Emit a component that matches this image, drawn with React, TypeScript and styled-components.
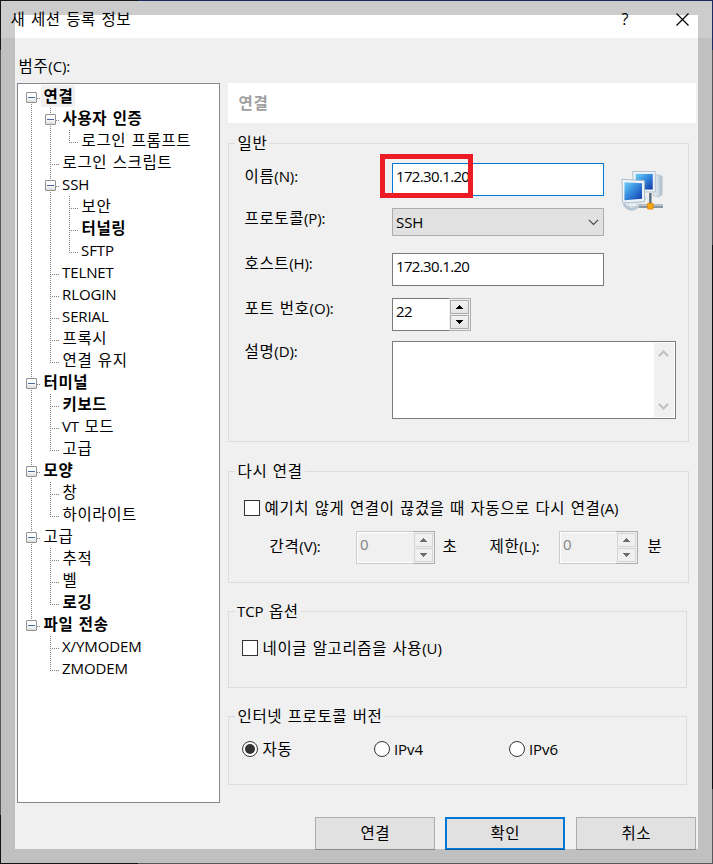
import React from "react";
import styled, { createGlobalStyle, css } from "styled-components";

const Global = createGlobalStyle`
  * { box-sizing: border-box; }
  html, body { margin: 0; padding: 0; }
  body {
    width: 713px;
    height: 864px;
    overflow: hidden;
    font-family: "Open Sans", "Noto Sans CJK KR", sans-serif;
    font-size: 15px;
    line-height: 20px;
    color: #000;
  }
`;

const Desktop = styled.div`
  width: 713px;
  height: 864px;
  padding: 1px;
  background:
    linear-gradient(90deg, #17161a 138px, #1b2a60 138px) 0 0 / 713px 1px no-repeat,
    linear-gradient(90deg, #141414 138px, #57575a 138px) 0 863px / 713px 1px no-repeat,
    linear-gradient(#17161a 50px, #57575a 50px, #57575a 815px, #141414 815px) 0 0 / 1px 864px no-repeat,
    linear-gradient(#1b2a60 50px, #57575a 50px, #4a4a4c 245px, #0c0c10 245px, #0c0c10 789px, #57575a 789px) 712px 0 / 1px 864px no-repeat;
`;

const Window = styled.div`
  position: relative;
  width: 711px;
  height: 862px;
  background: #f0f0f0;
  display: flex;
  flex-direction: column;

  &::after {
    content: "";
    position: absolute;
    inset: 0;
    border: 14px solid rgba(0, 0, 0, 0.2);
    pointer-events: none;
  }
`;

const TitleBar = styled.header`
  display: flex;
  align-items: center;
  flex: none;
  height: 37px;
  padding: 0 23px 0 9px;
  background: #fff;
`;

const Title = styled.h1`
  flex: 1;
  margin: -2px 0 0;
  font-size: inherit;
  font-weight: 400;
`;

const HelpButton = styled.span`
  width: 12px;
  margin: -2px 45px 0 0;
  font-size: 16px;
  text-align: center;
`;

const CloseIcon = styled.svg`
  display: block;
  width: 13px;
  height: 13px;
`;

const Hangul = styled.span`
  padding-left: 0.6px;
  font-family: "Noto Sans CJK KR", sans-serif;
  font-size: 15.5px;
  line-height: 1;
  letter-spacing: 0.6px;
`;

const Latin = styled.span<{ $numeric?: boolean }>`
  white-space: pre;
  letter-spacing: ${(p) => (p.$numeric ? "-0.65px" : "-0.1px")};
  word-spacing: 1.1px;
`;

function Txt({ children }: { children: string }) {
  return (
    <>
      {children.split(/([가-힣]+)/).filter(Boolean).map((run, i) =>
        /[가-힣]/.test(run) ? (
          <Hangul key={i}>{run}</Hangul>
        ) : (
          <Latin key={i} $numeric={/^[\d.]+$/.test(run)}>{run}</Latin>
        )
      )}
    </>
  );
}

const Body = styled.main`
  display: flex;
  flex: none;
  height: 765px;
`;

const Sidebar = styled.nav`
  width: 203px;
  margin-left: 16px;
`;

const CategoryLabel = styled.div`
  height: 45px;
  padding: 18px 0 0 1px;
`;

const Tree = styled.ul`
  height: 720px;
  margin: 0;
  padding: 2px 0 0 4px;
  list-style: none;
  background: #fff;
  border: 1px solid #828790;
`;

const TreeRow = styled.li<{ $bold?: boolean }>`
  display: flex;
  height: 22px;
  font-weight: ${(p) => (p.$bold ? 700 : 400)};
`;

const dotsV = "repeating-linear-gradient(180deg, #808080 0 1px, transparent 1px 2px)";
const dotsH = "repeating-linear-gradient(90deg, #808080 0 1px, transparent 1px 2px)";

type Guide = "blank" | "line" | "tee" | "end" | "start";

const guides = {
  blank: css``,
  line: css`background: ${dotsV} 9px 0 / 1px 22px no-repeat;`,
  tee: css`background: ${dotsV} 9px 0 / 1px 22px no-repeat, ${dotsH} 9px 12px / 9px 1px no-repeat;`,
  end: css`background: ${dotsV} 9px 0 / 1px 12px no-repeat, ${dotsH} 9px 12px / 9px 1px no-repeat;`,
  start: css`background: ${dotsV} 9px 12px / 1px 10px no-repeat, ${dotsH} 9px 12px / 9px 1px no-repeat;`,
};

const GuideCell = styled.span<{ $kind: Guide }>`
  display: flex;
  flex: none;
  width: 19px;
  height: 22px;
  padding: 6px 0 0 4px;
  ${(p) => guides[p.$kind]}
`;

const Toggle = styled.span`
  display: flex;
  align-items: center;
  justify-content: center;
  width: 11px;
  height: 11px;
  border: 1px solid #919191;
  border-radius: 1px;
  background: linear-gradient(#fff 45%, #dcdcdc);

  &::before {
    content: "";
    width: 7px;
    height: 1px;
    background: #4b63a7;
  }
`;

const NodeText = styled.span<{ $selected?: boolean }>`
  height: 22px;
  margin-top: -1px;
  padding: 0 2px;
  line-height: 22px;
  background: ${(p) => (p.$selected ? "#f0f0f0" : "transparent")};
`;

type Node = { label: string; bold?: boolean; guides: Guide[]; open?: boolean; selected?: boolean };

const nodes: Node[] = [
  { label: "연결", bold: true, guides: ["start"], open: true, selected: true },
  { label: "사용자 인증", bold: true, guides: ["line", "tee"], open: true },
  { label: "로그인 프롬프트", guides: ["line", "line", "end"] },
  { label: "로그인 스크립트", guides: ["line", "tee"] },
  { label: "SSH", guides: ["line", "tee"], open: true },
  { label: "보안", guides: ["line", "line", "tee"] },
  { label: "터널링", bold: true, guides: ["line", "line", "tee"] },
  { label: "SFTP", guides: ["line", "line", "end"] },
  { label: "TELNET", guides: ["line", "tee"] },
  { label: "RLOGIN", guides: ["line", "tee"] },
  { label: "SERIAL", guides: ["line", "tee"] },
  { label: "프록시", guides: ["line", "tee"] },
  { label: "연결 유지", guides: ["line", "end"] },
  { label: "터미널", bold: true, guides: ["tee"], open: true },
  { label: "키보드", bold: true, guides: ["line", "tee"] },
  { label: "VT 모드", guides: ["line", "tee"] },
  { label: "고급", guides: ["line", "end"] },
  { label: "모양", bold: true, guides: ["tee"], open: true },
  { label: "창", guides: ["line", "tee"] },
  { label: "하이라이트", guides: ["line", "end"] },
  { label: "고급", guides: ["tee"], open: true },
  { label: "추적", guides: ["line", "tee"] },
  { label: "벨", guides: ["line", "tee"] },
  { label: "로깅", bold: true, guides: ["line", "end"] },
  { label: "파일 전송", bold: true, guides: ["end"], open: true },
  { label: "X/YMODEM", guides: ["blank", "tee"] },
  { label: "ZMODEM", guides: ["blank", "end"] },
];

const Content = styled.section`
  display: flex;
  flex-direction: column;
  width: 468px;
  margin-left: 8px;
  padding-top: 45px;
`;

const PageHeader = styled.h2`
  flex: none;
  height: 40px;
  margin: 0 0 20px;
  padding: 10px 0 0 10px;
  background: #fff;
  color: #a0a0a0;
  font-size: inherit;
  font-weight: 700;
`;

const Group = styled.section<{ $w: number; $h: number; $gap?: number }>`
  flex: none;
  width: ${(p) => p.$w}px;
  height: ${(p) => p.$h}px;
  margin-bottom: ${(p) => p.$gap ?? 0}px;
  border: 1px solid #dcdcdc;
`;

const Legend = styled.h3`
  width: fit-content;
  height: 20px;
  margin: -11px 0 0 6px;
  padding: 0 2px;
  background: #f0f0f0;
  font-size: inherit;
  font-weight: 400;
`;

const FormRow = styled.div<{ $h: number; $gap: number }>`
  display: flex;
  height: ${(p) => p.$h}px;
  margin-top: ${(p) => p.$gap}px;
  padding-left: 15px;
`;

const Label = styled.label<{ $w: number; $top: number }>`
  flex: none;
  width: ${(p) => p.$w}px;
  padding-top: ${(p) => p.$top}px;
  white-space: nowrap;
`;

const TextField = styled.div<{ $focus?: boolean }>`
  width: 212px;
  height: 33px;
  padding: 2px 0 0 3px;
  border: 1px solid ${(p) => (p.$focus ? "#0078d7" : "#7a7a7a")};
  background: #fff;
`;

const Select = styled.div`
  display: flex;
  justify-content: space-between;
  width: 212px;
  height: 28px;
  padding: 3px 4px 0 3px;
  border: 1px solid #adadad;
  background: #e1e1e1;
`;

const Chevron = styled.svg`
  display: block;
  width: 11px;
  height: 7px;
  fill: none;
`;

const SelectChevron = styled(Chevron)`
  margin-top: 7px;
  stroke: #444;
`;

const Spinner = styled.div<{ $disabled?: boolean }>`
  display: flex;
  flex: none;
  width: 79px;
  height: 33px;
  color: ${(p) => (p.$disabled ? "#838383" : "#000")};
`;

const SpinnerValue = styled.div<{ $disabled?: boolean }>`
  width: 57px;
  padding: 2px 0 0 3px;
  border: 1px solid ${(p) => (p.$disabled ? "#ccc" : "#7a7a7a")};
  border-right: 0;
  background: ${(p) => (p.$disabled ? "#f0f0f0" : "#fff")};
  box-shadow: ${(p) => (p.$disabled ? "inset 1px 1px #fff, inset 0 -1px #fff" : "none")};
`;

const SpinnerButtons = styled.div`
  display: flex;
  flex-direction: column;
  gap: 1px;
  width: 22px;
  padding: 1px 1px 1px 0;
  border: 1px solid #adadad;
  border-left: 0;
  background: #f0f0f0;
`;

const SpinnerButton = styled.span<{ $disabled?: boolean }>`
  display: flex;
  align-items: center;
  justify-content: center;
  flex: 1;
  margin-left: 1px;
  border: 1px solid ${(p) => (p.$disabled ? "#d5d5d5" : "#ababab")};
  background: ${(p) => (p.$disabled ? "#f0f0f0" : "linear-gradient(#f2f2f2, #e4e4e4)")};

  svg {
    width: 7px;
    height: 4px;
    fill: ${(p) => (p.$disabled ? "#6d6d6d" : "#000")};
  }
`;

const TextArea = styled.div`
  display: flex;
  justify-content: flex-end;
  width: 284px;
  height: 78px;
  padding: 1px;
  border: 1px solid #7a7a7a;
  background: #fff;
`;

const ScrollTrack = styled.div`
  display: flex;
  flex-direction: column;
  align-items: flex-start;
  justify-content: space-between;
  width: 20px;
  padding: 7px 0 7px 4px;
  background: #f0f0f0;

  svg { stroke: #bfbfbf; stroke-width: 2; }
`;

const SessionIcon = styled.svg`
  width: 43px;
  height: 44px;
  margin: 6px 0 0 17px;
  overflow: visible;
`;

const OptionRow = styled.label<{ $top: number; $left: number }>`
  display: flex;
  align-items: center;
  width: fit-content;
  height: 20px;
  margin: ${(p) => p.$top}px 0 0 ${(p) => p.$left}px;
`;

const CheckBox = styled.span`
  width: 16px;
  height: 16px;
  margin-right: 4px;
  border: 1px solid #333;
  background: #fff;
`;

const Radio = styled.span<{ $on?: boolean }>`
  display: flex;
  align-items: center;
  justify-content: center;
  width: 16px;
  height: 16px;
  margin-right: 4px;
  border: 1px solid #333;
  border-radius: 50%;
  background: #fff;

  &::before {
    content: "";
    width: 10px;
    height: 10px;
    border-radius: 50%;
    background: ${(p) => (p.$on ? "#333" : "transparent")};
  }
`;

const RadioRow = styled.div`
  display: grid;
  grid-template-columns: 132px 135px auto;
  margin: 13px 0 0 13px;
`;

const IntervalRow = styled.div`
  display: flex;
  margin: 13px 0 0 40px;
`;

const Unit = styled.span<{ $w: number; $pad: number }>`
  flex: none;
  width: ${(p) => p.$w}px;
  padding: 5px 0 0 ${(p) => p.$pad}px;
`;

const Footer = styled.footer`
  display: flex;
  justify-content: flex-end;
  gap: 10px;
  margin-top: 14px;
  padding-right: 16px;
`;

const PushButton = styled.button<{ $primary?: boolean }>`
  width: 120px;
  height: 33px;
  padding: 0 0 1px;
  border: ${(p) => (p.$primary ? "2px solid #0078d7" : "1px solid #adadad")};
  background: #e1e1e1;
  color: #000;
  font: inherit;

  &:last-child { margin-left: 1px; }
`;

const Highlight = styled.div`
  position: absolute;
  left: 379px;
  top: 153px;
  width: 93px;
  height: 44px;
  border: 5px solid #ed1c24;
`;

function Arrow({ down }: { down?: boolean }) {
  return (
    <svg viewBox="0 0 7 4" shapeRendering="crispEdges">
      <path d={down ? "M0 0h7v1H6v1H5v1H4v1H3V3H2V2H1V1H0z" : "M0 4h7V3H6V2H5V1H4V0H3v1H2v1H1v1H0z"} />
    </svg>
  );
}

function NumberSpinner({ value, disabled }: { value: string; disabled?: boolean }) {
  return (
    <Spinner $disabled={disabled}>
      <SpinnerValue $disabled={disabled}><Txt>{value}</Txt></SpinnerValue>
      <SpinnerButtons>
        <SpinnerButton $disabled={disabled}><Arrow /></SpinnerButton>
        <SpinnerButton $disabled={disabled}><Arrow down /></SpinnerButton>
      </SpinnerButtons>
    </Spinner>
  );
}

function ComputersIcon() {
  return (
    <SessionIcon viewBox="0 0 44 44">
      <defs>
        <linearGradient id="screen" x1="0" y1="0" x2="1" y2="1">
          <stop offset="0" stopColor="#6cd0f5" />
          <stop offset=".5" stopColor="#3385dc" />
          <stop offset="1" stopColor="#1238a8" />
        </linearGradient>
        <linearGradient id="tower" x1="0" y1="0" x2="1" y2="0">
          <stop offset="0" stopColor="#f6fafd" />
          <stop offset="1" stopColor="#a9bccb" />
        </linearGradient>
      </defs>
      <path d="M33 7l5-2 4 2v19l-3 2-6-1z" fill="url(#tower)" stroke="#b5c4d0" strokeWidth=".8" />
      <path d="M35 9v17M37 9v17" stroke="#d5e0e8" />
      <path d="M3 35c2 4 5 6 9 5.500s5-3 3-5" fill="none" stroke="#b4c5d1" strokeWidth="3" />
      <path d="M30 24v11" stroke="#5a7182" strokeWidth="2.5" />
      <path d="M12 2h23v21H13z" fill="#eef4f8" stroke="#b2c1cc" />
      <path d="M15 4.500h17.500v16H15z" fill="url(#screen)" />
      <path d="M27 28l-10 6" stroke="#dce6ed" strokeWidth="4" />
      <path d="M1 10l23 1.500V33L1.500 34z" fill="#eef4f8" stroke="#a9bac7" />
      <path d="M3.500 13l18 1v16l-18 1.500z" fill="url(#screen)" />
      <path d="M7 34h9l1 4H8z" fill="#e7eff5" stroke="#b7c6d1" strokeWidth=".7" />
      <path d="M18 37.500h25" stroke="#81929e" strokeWidth="3.600" />
      <path d="M18 36.700h25" stroke="#c8d3db" />
      <rect x="27" y="34.500" width="6" height="6" rx="1" fill="#f7a70b" stroke="#dc7f10" strokeWidth=".8" />
    </SessionIcon>
  );
}

export default function App() {
  return (
    <Desktop>
      <Global />
      <Window>
        <TitleBar>
          <Title><Txt>새 세션 등록 정보</Txt></Title>
          <HelpButton>?</HelpButton>
          <CloseIcon viewBox="0 0 13 13"><path d="M.5.5l12 12M12.500.5l-12 12" stroke="#000" strokeWidth="1.2" /></CloseIcon>
        </TitleBar>
        <Body>
          <Sidebar>
            <CategoryLabel><Txt>범주(C):</Txt></CategoryLabel>
            <Tree>
              {nodes.map((n, i) => (
                <TreeRow key={i} $bold={n.bold}>
                  {n.guides.map((g, j) => (
                    <GuideCell key={j} $kind={g}>{n.open && j === n.guides.length - 1 && <Toggle />}</GuideCell>
                  ))}
                  <NodeText $selected={n.selected}><Txt>{n.label}</Txt></NodeText>
                </TreeRow>
              ))}
            </Tree>
          </Sidebar>
          <Content>
            <PageHeader><Txt>연결</Txt></PageHeader>
            <Group $w={461} $h={299} $gap={29}>
              <Legend><Txt>일반</Txt></Legend>
              <FormRow $h={33} $gap={10}>
                <Label $w={148} $top={3}><Txt>이름(N):</Txt></Label>
                <TextField $focus><Txt>172.30.1.20</Txt></TextField>
                <ComputersIcon />
              </FormRow>
              <FormRow $h={28} $gap={12}>
                <Label $w={148} $top={0}><Txt>프로토콜(P):</Txt></Label>
                <Select>
                  <Txt>SSH</Txt>
                  <SelectChevron viewBox="0 0 11 7"><path d="M.8.8l4.700 4.700L10.200.8" strokeWidth="1.1" /></SelectChevron>
                </Select>
              </FormRow>
              <FormRow $h={33} $gap={17}>
                <Label $w={148} $top={0}><Txt>호스트(H):</Txt></Label>
                <TextField><Txt>172.30.1.20</Txt></TextField>
              </FormRow>
              <FormRow $h={33} $gap={12}>
                <Label $w={148} $top={0}><Txt>포트 번호(O):</Txt></Label>
                <NumberSpinner value="22" />
              </FormRow>
              <FormRow $h={78} $gap={10}>
                <Label $w={148} $top={0}><Txt>설명(D):</Txt></Label>
                <TextArea>
                  <ScrollTrack>
                    <Chevron viewBox="0 0 11 7"><path d="M1 6l4.500-4.500L10 6" /></Chevron>
                    <Chevron viewBox="0 0 11 7"><path d="M1 1l4.500 4.500L10 1" /></Chevron>
                  </ScrollTrack>
                </TextArea>
              </FormRow>
            </Group>
            <Group $w={461} $h={112} $gap={28}>
              <Legend><Txt>다시 연결</Txt></Legend>
              <OptionRow $top={17} $left={15}>
                <CheckBox /><span><Txt>예기치 않게 연결이 끊겼을 때 자동으로 다시 연결(A)</Txt></span>
              </OptionRow>
              <IntervalRow>
                <Label $w={87} $top={5}><Txt>간격(V):</Txt></Label>
                <NumberSpinner value="0" disabled />
                <Unit $w={54} $pad={7}><Txt>초</Txt></Unit>
                <Label $w={70} $top={5}><Txt>제한(L):</Txt></Label>
                <NumberSpinner value="0" disabled />
                <Unit $w={30} $pad={9}><Txt>분</Txt></Unit>
              </IntervalRow>
            </Group>
            <Group $w={459} $h={77} $gap={28}>
              <Legend><Txt>TCP 옵션</Txt></Legend>
              <OptionRow $top={17} $left={13}>
                <CheckBox /><span><Txt>네이글 알고리즘을 사용(U)</Txt></span>
              </OptionRow>
            </Group>
            <Group $w={459} $h={69}>
              <Legend><Txt>인터넷 프로토콜 버전</Txt></Legend>
              <RadioRow>
                <OptionRow $top={0} $left={0}><Radio $on /><span><Txt>자동</Txt></span></OptionRow>
                <OptionRow $top={0} $left={0}><Radio /><span><Txt>IPv4</Txt></span></OptionRow>
                <OptionRow $top={0} $left={0}><Radio /><span><Txt>IPv6</Txt></span></OptionRow>
              </RadioRow>
            </Group>
          </Content>
        </Body>
        <Footer>
          <PushButton><Txt>연결</Txt></PushButton>
          <PushButton $primary><Txt>확인</Txt></PushButton>
          <PushButton><Txt>취소</Txt></PushButton>
        </Footer>
        <Highlight />
      </Window>
    </Desktop>
  );
}
